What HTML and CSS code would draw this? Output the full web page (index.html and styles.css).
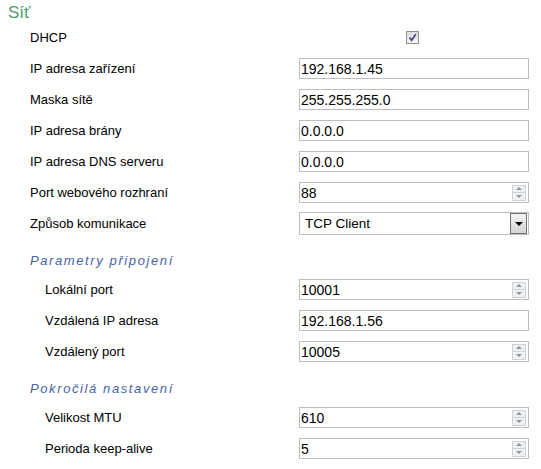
FILE: index.html
```html
<!DOCTYPE html>
<html lang="cs">
<head>
    <meta charset="UTF-8">
    <title>Síť</title>
    <link rel="stylesheet" href="styles.css">
</head>
<body>
    <div class="settings">
        <h1 class="title">Síť</h1>

        <div class="row">
            <label>DHCP</label>
            <span class="check"><svg width="9" height="9" viewBox="0 0 9 9"><path d="M1.5 4.5 L3.6 7.3 L7.8 1.2" fill="none" stroke="#3f4c86" stroke-width="1.8"/></svg></span>
        </div>
        <div class="row">
            <label>IP adresa zařízení</label>
            <div class="field"><input type="text" value="192.168.1.45"></div>
        </div>
        <div class="row">
            <label>Maska sítě</label>
            <div class="field"><input type="text" value="255.255.255.0"></div>
        </div>
        <div class="row">
            <label>IP adresa brány</label>
            <div class="field"><input type="text" value="0.0.0.0"></div>
        </div>
        <div class="row">
            <label>IP adresa DNS serveru</label>
            <div class="field"><input type="text" value="0.0.0.0"></div>
        </div>
        <div class="row">
            <label>Port webového rozhraní</label>
            <div class="field"><input type="text" value="88"><span class="spin"><i class="up"></i><i class="down"></i></span></div>
        </div>
        <div class="row">
            <label>Způsob komunikace</label>
            <div class="field select"><span class="value">TCP Client</span><span class="drop"><i></i></span></div>
        </div>

        <h2 class="group">Parametry připojení</h2>
        <div class="row sub">
            <label>Lokální port</label>
            <div class="field"><input type="text" value="10001"><span class="spin"><i class="up"></i><i class="down"></i></span></div>
        </div>
        <div class="row sub">
            <label>Vzdálená IP adresa</label>
            <div class="field"><input type="text" value="192.168.1.56"></div>
        </div>
        <div class="row sub">
            <label>Vzdálený port</label>
            <div class="field"><input type="text" value="10005"><span class="spin"><i class="up"></i><i class="down"></i></span></div>
        </div>

        <h2 class="group">Pokročilá nastavení</h2>
        <div class="row sub">
            <label>Velikost MTU</label>
            <div class="field"><input type="text" value="610"><span class="spin"><i class="up"></i><i class="down"></i></span></div>
        </div>
        <div class="row sub">
            <label>Perioda keep-alive</label>
            <div class="field"><input type="text" value="5"><span class="spin"><i class="up"></i><i class="down"></i></span></div>
        </div>
    </div>
</body>
</html>
```

FILE: styles.css
```css
body {
    margin: 0;
    padding: 0 0 0 8px;
    background: #fff;
    font-family: "Liberation Sans", Arial, sans-serif;
    font-size: 13px;
    color: #000;
}
.settings {
    width: 521px;
}
.title {
    margin: 0;
    height: 22px;
    line-height: 26px;
    font-size: 17px;
    font-weight: normal;
    color: #4b9b73;
}
.row {
    display: grid;
    grid-template-columns: 291px 230px;
    align-items: center;
    height: 31px;
}
.row label {
    padding-left: 22px;
}
.row.sub label {
    padding-left: 37px;
}
.group {
    margin: 0;
    padding: 14px 0 5px 22px;
    line-height: 16px;
    font-size: 13px;
    font-weight: normal;
    font-style: italic;
    letter-spacing: 1.6px;
    color: #4564a8;
}

/* checkbox */
.check {
    margin-left: 107px;
    width: 11px;
    height: 11px;
    border: 1px solid #8e8f8f;
    background: linear-gradient(#dcdcdc, #f6f6f6);
    display: flex;
    align-items: center;
    justify-content: center;
}

/* text fields */
.field {
    display: flex;
    align-items: center;
    height: 19px;
    border: 1px solid #bdbdbd;
    background: #fff;
}
.field input {
    flex: 1;
    min-width: 0;
    border: none;
    outline: none;
    padding: 0 0 0 1px;
    height: 19px;
    font-family: "Liberation Sans", Arial, sans-serif;
    font-size: 14px;
    color: #000;
    background: transparent;
}
.spin {
    display: flex;
    flex-direction: column;
    width: 12px;
    height: 14px;
    margin-right: 2px;
    border: 1px solid #cfd3d8;
    background: #eef0f2;
}
.spin i {
    flex: 1;
    display: flex;
    align-items: center;
    justify-content: center;
}
.spin i.up {
    border-bottom: 1px solid #cfd3d8;
}
.spin i::after {
    content: "";
    border-left: 3px solid transparent;
    border-right: 3px solid transparent;
}
.spin i.up::after {
    border-bottom: 3px solid #8a94a8;
}
.spin i.down::after {
    border-top: 3px solid #8a94a8;
}

/* select box */
.field.select {
    height: 21px;
}
.select .value {
    flex: 1;
    padding-left: 5px;
    font-size: 13.5px;
    color: #000;
}
.drop {
    width: 15px;
    height: 19px;
    margin-right: 1px;
    border: 1px solid #707070;
    background: linear-gradient(#f2f2f2, #d4d4d4);
    display: flex;
    align-items: center;
    justify-content: center;
}
.drop i {
    border-left: 4px solid transparent;
    border-right: 4px solid transparent;
    border-top: 4px solid #000;
}
```
